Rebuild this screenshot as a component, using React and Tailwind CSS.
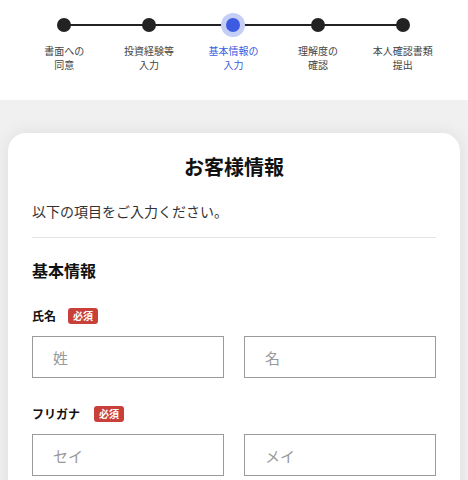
const font = { fontFamily: '"Noto Sans CJK JP", "Noto Sans", sans-serif' }

const steps = [
  ["書面への", "同意"],
  ["投資経験等", "入力"],
  ["基本情報の", "入力"],
  ["理解度の", "確認"],
  ["本人確認書類", "提出"],
]
const current = 2

function Stepper() {
  return (
    <div className="h-[100px] bg-white">
      <div className="relative ml-[22px] w-[423px] pt-[18px]">
        {/* line between first and last dot */}
        <div className="absolute left-[42px] right-[42px] top-[24px] h-[2px] bg-[#222]" />
        <div className="flex">
          {steps.map((s, i) => (
            <div key={i} className="flex flex-1 flex-col items-center">
              <div className="relative flex h-[14px] w-[14px] items-center justify-center">
                {i === current && (
                  <div className="absolute -inset-[5px] rounded-full bg-[#c5cef5]" />
                )}
                <div
                  className={`relative h-[14px] w-[14px] rounded-full ${
                    i === current ? "bg-[#3d5be0]" : "bg-[#222]"
                  }`}
                />
              </div>
              <div
                className={`mt-[12px] text-center text-[10px] leading-[14px] ${
                  i === current ? "text-[#3d5be0]" : "text-[#444]"
                }`}
              >
                {s[0]}
                <br />
                {s[1]}
              </div>
            </div>
          ))}
        </div>
      </div>
    </div>
  )
}

function Badge({ gap }) {
  return (
    <span className={`${gap} inline-flex h-[16px] items-center rounded-[3px] bg-[#c9403a] px-[5px] text-[10px] font-bold leading-none text-white`}>
      必須
    </span>
  )
}

function Field({ label, a, b, top, gap }) {
  return (
    <div className={top}>
      <div className="flex h-[16px] items-center text-[12px] font-bold text-[#111]">
        {label}
        <Badge gap={gap} />
      </div>
      <div className="mt-[12px] grid grid-cols-2 gap-5">
        <input
          placeholder={a}
          className="h-[42px] w-full border border-[#9a9a9a] bg-white px-[20px] text-[15px] placeholder:text-[#999] outline-none"
          style={font}
        />
        <input
          placeholder={b}
          className="h-[42px] w-full border border-[#9a9a9a] bg-white px-[20px] text-[15px] placeholder:text-[#999] outline-none"
          style={font}
        />
      </div>
    </div>
  )
}

export default function App() {
  return (
    <div className="h-[480px] overflow-hidden bg-[#f0f0f0]" style={font}>
      <Stepper />
      <div className="pt-[33px]">
        <div className="mx-2 rounded-[18px] bg-white px-6 pt-5 pb-10 shadow-[0_0_18px_rgba(0,0,0,0.08)]">
          <h1 className="text-center text-[20px] font-bold leading-[28px] text-[#111]">お客様情報</h1>
          <p className="mt-5 border-b border-[#e3e3e3] pb-4 text-[14px] leading-[20px] text-[#333]">
            以下の項目をご入力ください。
          </p>
          <h2 className="mt-5 text-[16px] font-bold leading-[24px] text-[#111]">基本情報</h2>
          <Field label="氏名" a="姓" b="名" top="mt-[26px]" gap="ml-[12px]" />
          <Field label="フリガナ" a="セイ" b="メイ" top="mt-[28px]" gap="ml-[14px]" />
        </div>
      </div>
    </div>
  )
}
